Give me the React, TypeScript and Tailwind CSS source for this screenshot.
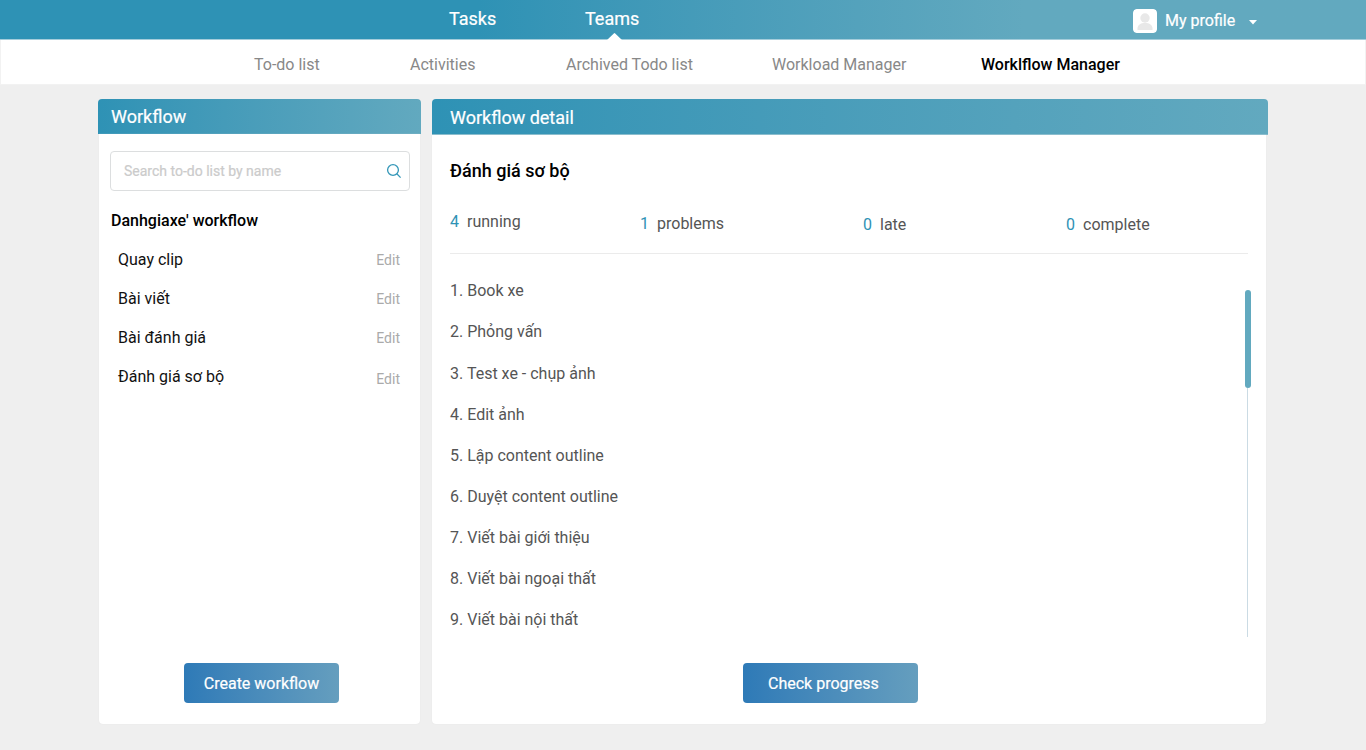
const tabs = [
  { label: "To-do list", width: "w-[156px]" },
  { label: "Activities", width: "w-[156px]" },
  { label: "Archived Todo list", width: "w-[206px]" },
  { label: "Workload Manager", width: "w-[209px]" },
];

const workflows = [
  { name: "Quay clip", edit: "" },
  { name: "Bài viết", edit: "" },
  { name: "Bài đánh giá", edit: "" },
  { name: "Đánh giá sơ bộ", edit: "pt-[2px]" },
];

const stats = [
  { count: 4, label: "running", cell: "w-[190px]" },
  { count: 1, label: "problems", cell: "w-[223px] pt-[2px]" },
  { count: 0, label: "late", cell: "w-[203px] pt-[3px]" },
  { count: 0, label: "complete", cell: "pt-[3px]" },
];

const steps = [
  "Book xe",
  "Phỏng vấn",
  "Test xe - chụp ảnh",
  "Edit ảnh",
  "Lập content outline",
  "Duyệt content outline",
  "Viết bài giới thiệu",
  "Viết bài ngoại thất",
  "Viết bài nội thất",
];

function Header() {
  return (
    <header className="flex h-10 border-b border-[#a5cddb] bg-linear-to-r from-[#2e92b5] from-35% to-[#62a9bf] to-75% pl-[449px] text-white [-webkit-text-stroke:0.2px_white]">
      <a className="w-[136px] pt-[7px] text-lg leading-6">Tasks</a>
      <a className="relative w-[548px] pt-[7px] text-lg leading-6">
        Teams
        <svg className="absolute top-[33px] left-[22px]" width="16" height="7" viewBox="0 0 16 7">
          <path d="M0 7L6.8 0.4Q7.5 -0.3 8.2 0.4L15 7Z" fill="#fff" />
        </svg>
      </a>
      <div className="flex pt-[9px]">
        <svg className="rounded" width="24" height="24" viewBox="0 0 24 24">
          <rect width="24" height="24" rx="3.5" fill="#fff" />
          <circle cx="12" cy="9" r="4.7" fill="#e8e8e8" />
          <path d="M4.5 21v-1.5C4.5 16 7.5 14 12 14s7.5 2 7.5 5.5V21Z" fill="#e8e8e8" />
        </svg>
        <span className="ml-2 w-[83px] text-base leading-6">My profile</span>
        <svg className="mt-[11px]" width="10" height="5" viewBox="0 0 10 5">
          <path d="M1 0H9L5 4.5Z" fill="#fff" />
        </svg>
      </div>
    </header>
  );
}

function Sidebar() {
  return (
    <section className="flex h-[625px] w-[323px] flex-col">
      <h2 className="h-[35px] shrink-0 rounded-t bg-linear-to-r from-[#2e92b5] to-[#62a9bf] pt-[6px] pl-[13px] text-lg leading-6 text-white [-webkit-text-stroke:0.2px_white]">
        Workflow
      </h2>
      <div className="mx-px flex flex-1 flex-col rounded-b bg-white pt-[17px] shadow-[0_0_1px_#ddd]">
        <div className="ml-[11px] flex h-10 w-[300px] justify-between rounded border border-[#dcdedf] pr-[7px] pl-[13px]">
          <span className="text-sm leading-[38px] text-[#cbcbcb] [-webkit-text-stroke:0.2px_#cbcbcb]">Search to-do list by name</span>
          <svg className="mt-[11px]" width="16" height="16" viewBox="0 0 16 16" fill="none" stroke="#3497b8" strokeWidth="1.3">
            <circle cx="7" cy="7" r="5.4" />
            <path d="M10.8 10.8L14.6 14.6" />
          </svg>
        </div>
        <h3 className="mt-[18px] ml-3 text-base leading-6 font-medium text-black">Danhgiaxe' workflow</h3>
        <ul className="mt-[15px] flex flex-col gap-[15px] pr-5 pl-[19px]">
          {workflows.map((item) => (
            <li key={item.name} className="flex h-6 justify-between text-base leading-6 text-[#111]">
              <span>{item.name}</span>
              <a className={`text-sm leading-6 text-[#aaa] ${item.edit}`}>Edit</a>
            </li>
          ))}
        </ul>
        <button className="mt-auto mb-[21px] ml-[85px] h-10 w-[155px] rounded bg-linear-to-r from-[#2e7ab7] to-[#659ebe] pt-[2px] text-base text-white [-webkit-text-stroke:0.2px_white]">
          Create workflow
        </button>
      </div>
    </section>
  );
}

function Detail() {
  return (
    <section className="flex h-[625px] w-[836px] flex-col">
      <h2 className="h-9 shrink-0 rounded-t border-b border-[#82bacb] bg-linear-to-r from-[#2e92b5] to-[#62a9bf] pt-[7px] pl-[18px] text-lg leading-6 text-white [-webkit-text-stroke:0.2px_white]">
        Workflow detail
      </h2>
      <div className="mr-[2px] flex flex-1 flex-col rounded-b bg-white pt-6 pl-[18px] shadow-[0_0_1px_#ddd]">
        <h3 className="text-lg leading-6 font-medium text-black">Đánh giá sơ bộ</h3>
        <div className="mt-[27px] flex h-[44px] w-[798px] border-b border-[#ebebeb] text-base leading-6 text-[#555]">
          {stats.map((stat) => (
            <div key={stat.label} className={`flex gap-2 ${stat.cell}`}>
              <span className="text-[#2e92b5]">{stat.count}</span>
              <span>{stat.label}</span>
            </div>
          ))}
        </div>
        <div className="mt-6 flex h-[371px] w-[801px] justify-between">
          <ol className="flex flex-col gap-[17px] pt-px text-base leading-6 text-[#555]">
            {steps.map((step, i) => (
              <li key={step} className={i === 2 ? "mt-px" : ""}>
                {i + 1}. {step}
              </li>
            ))}
          </ol>
          <div className="mt-3 flex w-[6px] flex-col">
            <div className="h-[98px] rounded-sm bg-[#62a9bf]" />
            <div className="ml-[2px] h-[249px] w-px bg-[#cbdbe4]" />
          </div>
        </div>
        <button className="mt-auto mb-[21px] ml-[293px] h-10 w-[175px] rounded bg-linear-to-r from-[#2e7ab7] to-[#659ebe] pt-[2px] pl-[25px] text-left text-base text-white [-webkit-text-stroke:0.2px_white]">
          Check progress
        </button>
      </div>
    </section>
  );
}

export default function App() {
  return (
    <div className="h-[750px] overflow-hidden bg-[#efefef] font-['Roboto',sans-serif]">
      <Header />
      <nav className="flex h-[45px] border-x border-b border-[#f2f2f2] bg-white pt-[13px] pl-[253px] text-base leading-6 text-[#888]">
        {tabs.map((tab) => (
          <a key={tab.label} className={tab.width}>
            {tab.label}
          </a>
        ))}
        <a className="font-medium text-black">Worklflow Manager</a>
      </nav>
      <main className="flex gap-[11px] pt-[14px] pl-[98px]">
        <Sidebar />
        <Detail />
      </main>
    </div>
  );
}
